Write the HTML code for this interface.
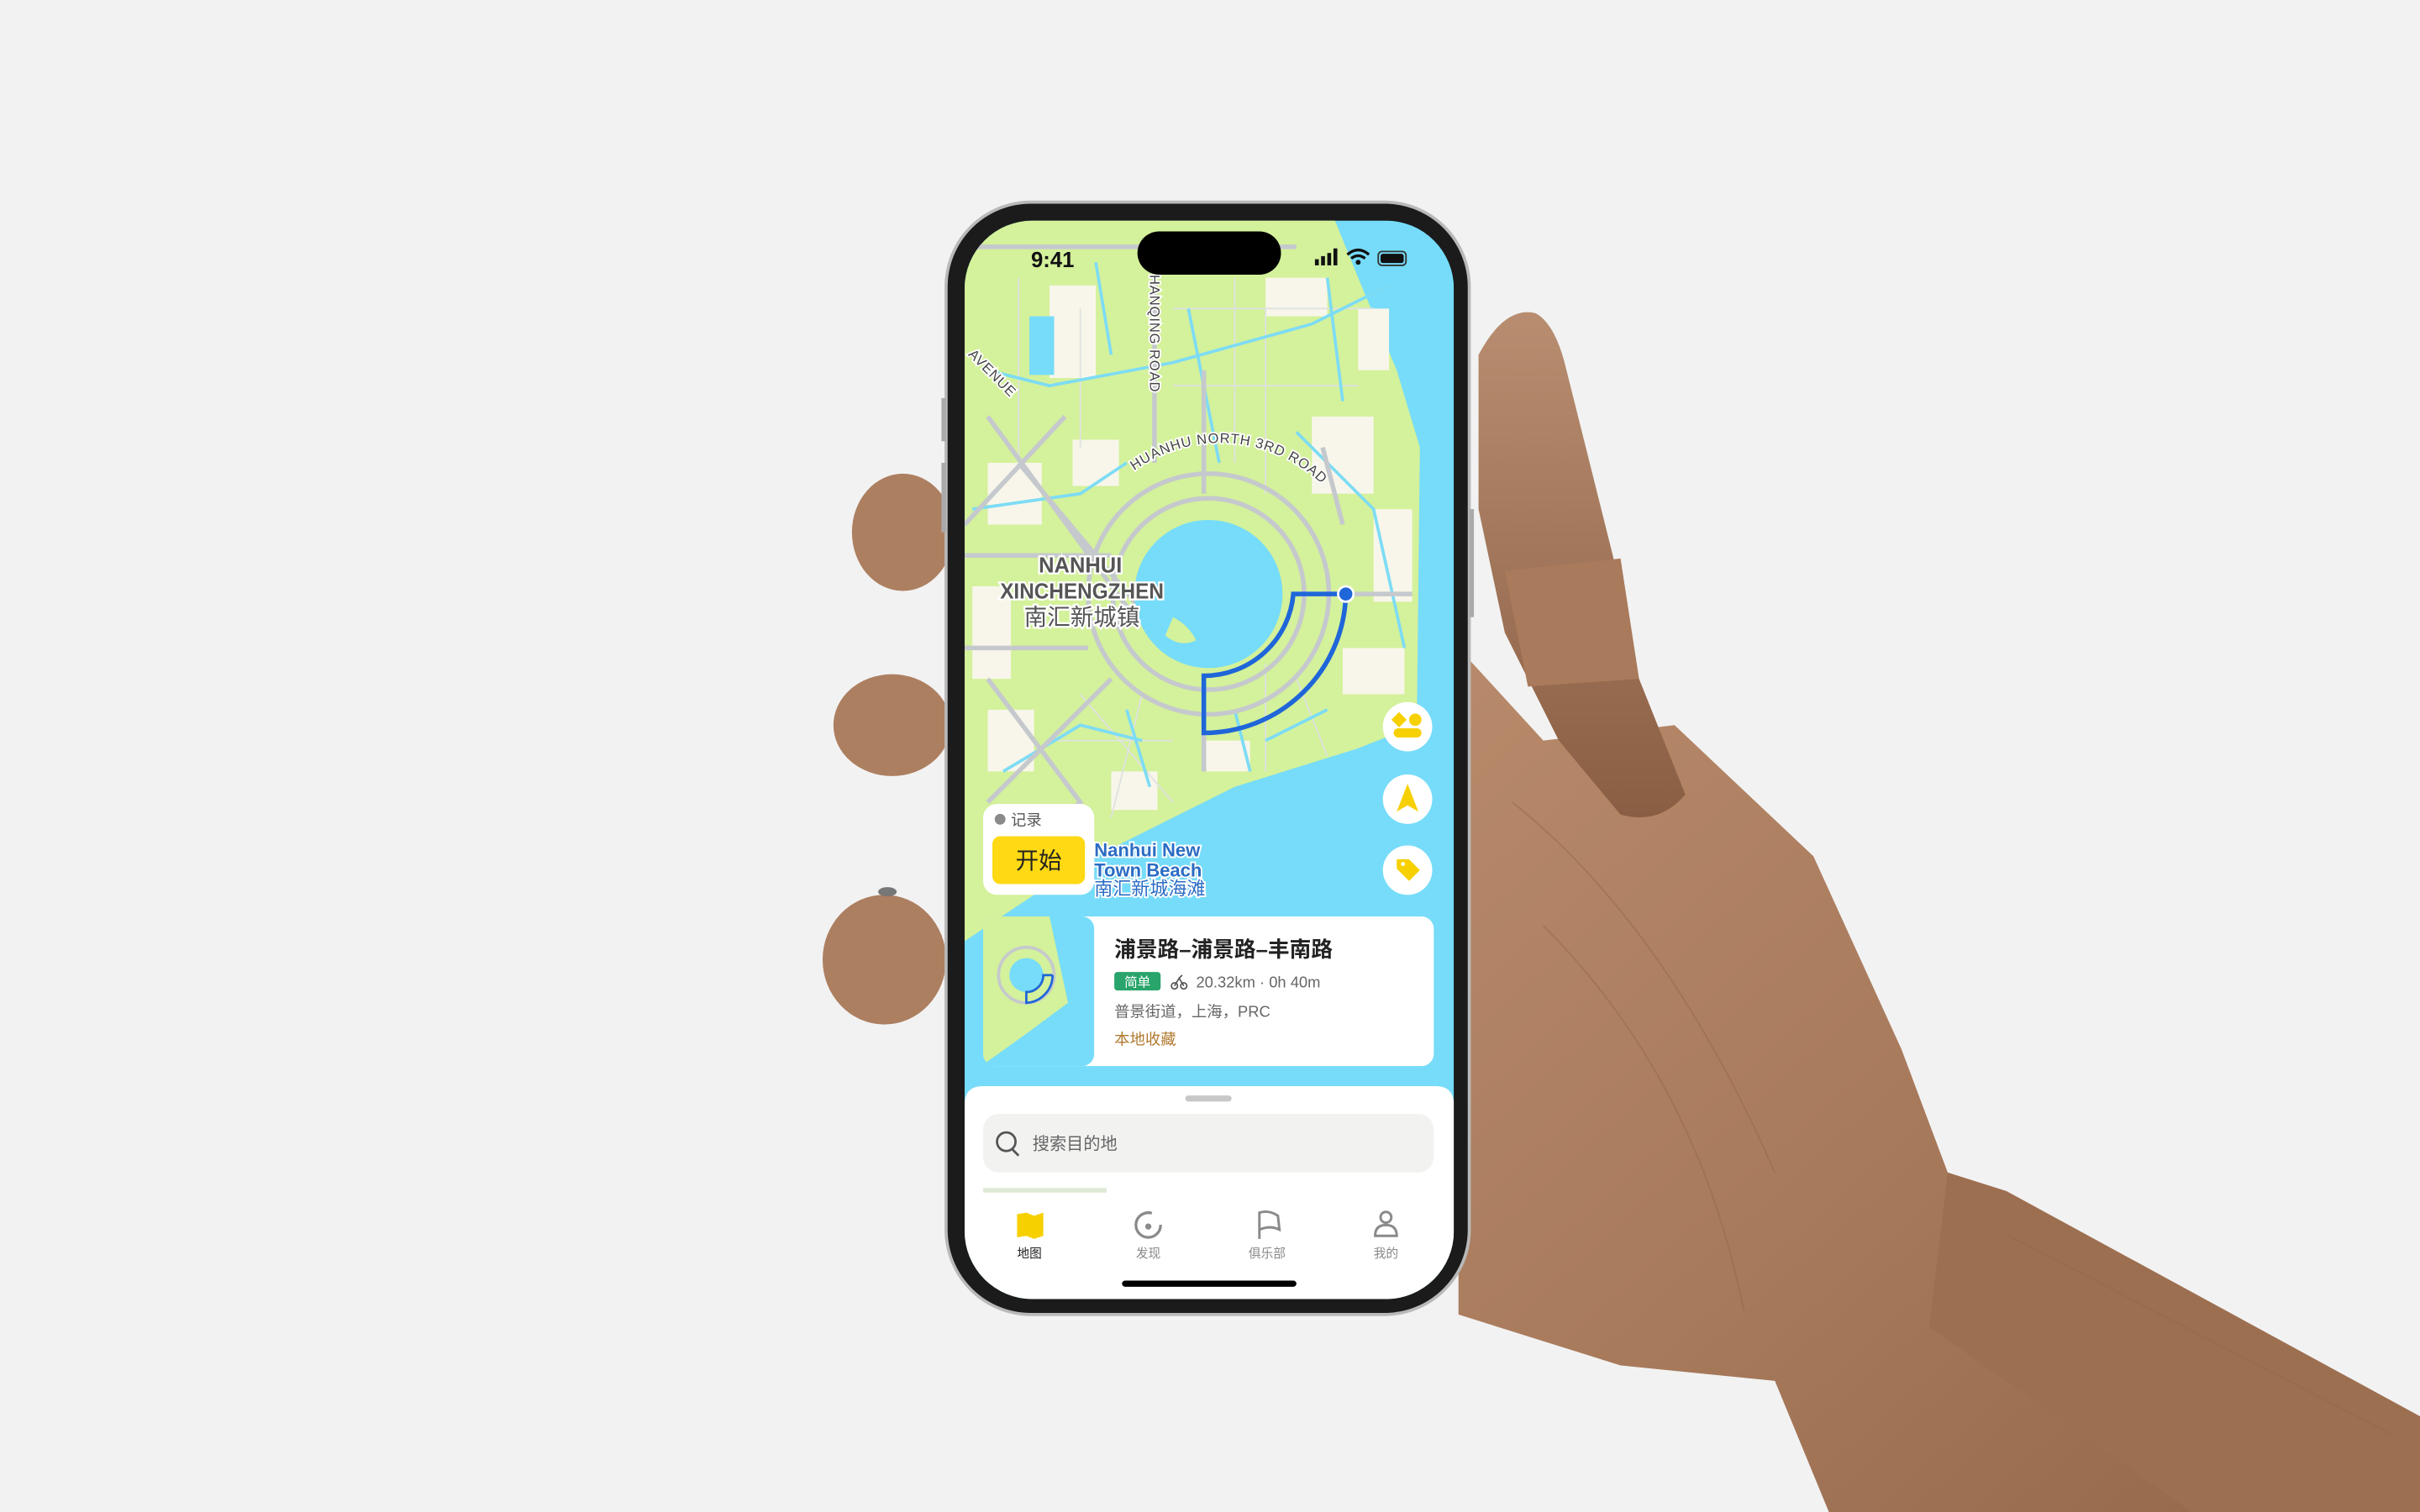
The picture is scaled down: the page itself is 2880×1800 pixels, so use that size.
<!DOCTYPE html>
<html><head><meta charset="utf-8"><style>
html,body{margin:0;padding:0;background:#f2f2f2;}
svg{display:block;}
text{font-family:"Liberation Sans","Noto Sans CJK SC",sans-serif;}
</style></head><body>
<svg width="2880" height="1800" viewBox="0 0 1568 980" xmlns="http://www.w3.org/2000/svg">
<defs>
<clipPath id="scr"><rect x="625" y="143" width="317" height="699" rx="44"/></clipPath>
<clipPath id="thumb"><rect x="637" y="594" width="72" height="97" rx="8"/></clipPath>
<linearGradient id="wood" x1="0" y1="0" x2="1" y2="1">
<stop offset="0" stop-color="#b88a6b"/><stop offset="0.5" stop-color="#a87a5c"/><stop offset="1" stop-color="#936649"/></linearGradient>
<linearGradient id="wood2" x1="0" y1="0" x2="0" y2="1">
<stop offset="0" stop-color="#b88d70"/><stop offset="1" stop-color="#8a5e43"/></linearGradient>
<path id="arcN" d="M 735 305 A 95 95 0 0 1 880 350"/>
</defs>
<rect width="1568" height="980" fill="#f2f2f2"/>
<!-- hand -->
<path d="M945 420 L1000 480 L1085 470 L1175 555 L1232 680 L1262 760 L1300 772 L1568 918 L1568 980 L1185 980 L1150 895 L1050 885 L945 852 Z" fill="url(#wood)"/>
<path d="M1262 760 L1300 772 L1568 918 L1568 980 L1420 980 L1250 860 Z" fill="#9d6f51"/>
<g stroke="#94684b" stroke-width="1" opacity="0.5" fill="none">
<path d="M980 520 Q1080 600 1150 760"/><path d="M1000 600 Q1100 700 1130 850"/><path d="M1300 800 L1550 930"/></g>
<path d="M958 230 Q975 198 995 203 Q1008 210 1015 240 L1045 360 L1062 440 L1092 515 Q1075 535 1050 528 L1010 480 L975 410 L958 330 Z" fill="url(#wood2)"/>
<path d="M975 370 L1050 362 L1062 440 L990 445 Z" fill="#a97a5b"/>
<ellipse cx="585" cy="345" rx="33" ry="38" fill="#ad7f61"/>
<ellipse cx="578" cy="470" rx="38" ry="33" fill="#ad7f61"/>
<ellipse cx="573" cy="622" rx="40" ry="42" fill="#ad7f61"/>
<ellipse cx="575" cy="578" rx="6" ry="3" fill="#777"/>
<!-- phone -->
<rect x="612" y="130" width="341" height="723" rx="56" fill="#b9b9b9"/>
<rect x="614" y="132" width="337" height="719" rx="54" fill="#1b1b1b"/>
<rect x="610" y="258" width="3" height="28" fill="#aaa"/>
<rect x="610" y="300" width="3" height="45" fill="#aaa"/>
<rect x="952" y="330" width="3" height="70" fill="#aaa"/>
<g clip-path="url(#scr)">
<rect x="625" y="143" width="317" height="699" fill="#76dcf9"/>
<path d="M625 143 L865 143 L880 180 L905 240 L920 290 L918 470 L880 485 L800 510 L700 560 L640 600 L625 610 Z" fill="#d4f19b"/>
<g fill="#f8f6ea">
<rect x="680" y="185" width="30" height="60"/><rect x="640" y="300" width="35" height="40"/><rect x="850" y="270" width="40" height="50"/>
<rect x="820" y="180" width="40" height="25"/><rect x="890" y="330" width="25" height="60"/><rect x="630" y="380" width="25" height="60"/>
<rect x="695" y="285" width="30" height="30"/><rect x="870" y="420" width="40" height="30"/><rect x="640" y="460" width="30" height="40"/>
<rect x="880" y="200" width="20" height="40"/><rect x="780" y="480" width="30" height="20"/><rect x="720" y="500" width="30" height="25"/>
</g>
<rect x="667" y="205" width="16" height="38" fill="#76dcf9"/>
<g stroke="#dfe2e0" stroke-width="1" fill="none">
<path d="M800 180 L800 300 M820 200 L820 320 M760 200 L890 200 M760 250 L880 250 M700 200 L700 290 M660 180 L660 300"/>
<path d="M700 450 L760 520 M740 450 L720 530 M680 480 L760 480 M820 430 L820 500 M840 440 L860 490"/>
</g>
<g stroke="#7ddcf5" stroke-width="2" fill="none">
<path d="M640 240 L680 250 L760 235 L850 210 L900 185"/><path d="M630 330 L700 320 L730 300"/><path d="M840 280 L890 330 L910 420"/>
<path d="M770 200 L790 300"/><path d="M820 480 L860 460"/><path d="M650 500 L700 470 L740 480"/>
<path d="M710 170 L720 230"/><path d="M860 180 L870 260"/><path d="M730 460 L745 510"/><path d="M800 460 L810 500"/>
</g>
<g stroke="#c5c9cd" stroke-width="3" fill="none">
<circle cx="783" cy="385" r="62"/><circle cx="783" cy="385" r="78"/>
<path d="M625 360 L720 360"/><path d="M625 420 L705 420"/><path d="M860 385 L915 385"/>
<path d="M640 270 L735 400"/><path d="M690 270 L625 340"/><path d="M660 300 L760 420"/>
<path d="M748 180 L748 300"/><path d="M857 290 L870 340"/><path d="M780 440 L780 500"/>
<path d="M640 440 L700 520 L650 560"/><path d="M720 440 L640 520"/>
<path d="M625 160 L840 160"/><path d="M780 240 L780 320"/>
</g>
<circle cx="783" cy="385" r="48" fill="#76dcf9"/>
<path d="M760 400 Q770 405 775 415 Q765 420 755 412 Z" fill="#d4f19b"/>
<path d="M872 385 L838 385 A58 58 0 0 1 780 438 L780 475 A92 92 0 0 0 872 385" fill="none" stroke="#1f66d9" stroke-width="3"/>
<circle cx="872" cy="385" r="5" fill="#1f66d9" stroke="#fff" stroke-width="1.5"/>
<g font-weight="bold" fill="#555" stroke="#fff" stroke-width="2.5" paint-order="stroke" text-anchor="middle">
<text x="700" y="371" font-size="14" textLength="54" lengthAdjust="spacingAndGlyphs">NANHUI</text>
<text x="701" y="388" font-size="14" textLength="106" lengthAdjust="spacingAndGlyphs">XINCHENGZHEN</text>
<text x="701" y="405" font-size="15" font-weight="normal">南汇新城镇</text>
</g>
<g font-size="9" fill="#444" stroke="#fff" stroke-width="2" paint-order="stroke" letter-spacing="0.5">
<text transform="translate(745,178) rotate(90)">HANQING ROAD</text>
<text transform="translate(627,230) rotate(45)">AVENUE</text>
<text><textPath href="#arcN">HUANHU NORTH 3RD ROAD</textPath></text>
</g>
<g font-size="12" font-weight="bold" fill="#2b6cc4" stroke="#fff" stroke-width="2" paint-order="stroke">
<text x="709" y="555">Nanhui New</text><text x="709" y="568">Town Beach</text><text x="709" y="580" font-weight="normal">南汇新城海滩</text>
</g>
<!-- status bar -->
<text x="668" y="173" font-size="14" font-weight="bold" fill="#111">9:41</text>
<rect x="737" y="150" width="93" height="28" rx="14" fill="#000"/>
<g fill="#111"><rect x="852" y="168" width="2.5" height="4"/><rect x="856" y="166" width="2.5" height="6"/><rect x="860" y="164" width="2.5" height="8"/><rect x="864" y="161" width="2.5" height="11"/></g>
<path d="M873 165 Q880 159 887 165 M875.5 167.5 Q880 164 884.5 167.5" stroke="#111" stroke-width="1.8" fill="none"/><circle cx="880" cy="170" r="1.6" fill="#111"/>
<rect x="893" y="163" width="18" height="9" rx="2.5" fill="none" stroke="#333" stroke-width="1"/><rect x="894.5" y="164.5" width="15" height="6" rx="1.5" fill="#111"/>
<!-- buttons -->
<g fill="#fff"><circle cx="912" cy="471" r="16"/><circle cx="912" cy="518" r="16"/><circle cx="912" cy="564" r="16"/></g>
<g fill="#f7d000">
<rect x="903" y="463" width="7" height="7" transform="rotate(45 906.5 466.5)"/><circle cx="917" cy="466.5" r="4"/><rect x="903" y="472" width="18" height="6" rx="3"/>
<path d="M912 508 L919 526 L912 522 L905 526 Z"/>
<path d="M905 557 L913 557 L920 564 L913 571 L905 563 Z"/>
</g>
<circle cx="909" cy="560" r="1.3" fill="#fff"/>
<!-- record -->
<rect x="637" y="521" width="72" height="59" rx="9" fill="#fff"/>
<circle cx="648" cy="531" r="3.5" fill="#8a8a8a"/><text x="655" y="535" font-size="10" fill="#555">记录</text>
<rect x="643" y="542" width="60" height="31" rx="5" fill="#fed914"/>
<text x="673" y="563" font-size="15" text-anchor="middle" fill="#222">开始</text>
<!-- route card -->
<rect x="637" y="594" width="292" height="97" rx="8" fill="#fff"/>
<g clip-path="url(#thumb)">
<rect x="637" y="594" width="72" height="97" fill="#76dcf9"/>
<path d="M637 594 L680 594 L692 650 L665 670 L637 690 Z" fill="#d4f19b"/>
<circle cx="665" cy="632" r="18" fill="none" stroke="#c5c9cd" stroke-width="2"/>
<circle cx="665" cy="632" r="11" fill="#76dcf9"/>
<path d="M682 632 L676 632 A11 11 0 0 1 665 643 L665 650 A18 18 0 0 0 682 632" fill="none" stroke="#1f66d9" stroke-width="1.5"/>
</g>
<text x="722" y="620" font-size="14" font-weight="bold" fill="#222">浦景路–浦景路–丰南路</text>
<rect x="722" y="630" width="30" height="12" rx="2" fill="#29a46a"/>
<text x="737" y="639.5" font-size="8.5" fill="#fff" text-anchor="middle">简单</text>
<g stroke="#555" stroke-width="0.9" fill="none"><circle cx="761" cy="639" r="2"/><circle cx="767" cy="639" r="2"/><path d="M761 639 L764 634 L767 639 M764 634 L766 632"/></g>
<text x="775" y="640" font-size="10" fill="#666">20.32km · 0h 40m</text>
<text x="722" y="659" font-size="10" fill="#666">普景街道，上海，PRC</text>
<text x="722" y="677" font-size="10" fill="#b07a30">本地收藏</text>
<!-- bottom sheet -->
<path d="M625 716 Q625 704 637 704 L930 704 Q942 704 942 716 L942 842 L625 842 Z" fill="#fff"/>
<rect x="768" y="710" width="30" height="4" rx="2" fill="#c8c8c8"/>
<rect x="637" y="722" width="292" height="38" rx="10" fill="#f2f2f1"/>
<circle cx="652" cy="740" r="6" fill="none" stroke="#555" stroke-width="1.5"/><path d="M656 745 L660 749" stroke="#555" stroke-width="1.5"/>
<text x="669" y="745" font-size="11" fill="#666">搜索目的地</text>
<rect x="637" y="770" width="80" height="3" fill="#dfe9d6"/>
<path d="M659 787 L665 786 L670 788 L676 786 L676 801 L670 803 L665 801 L659 802 Z" fill="#f7d000"/>
<circle cx="744" cy="794" r="8" fill="none" stroke="#8a8a8a" stroke-width="1.8" stroke-dasharray="40 10"/><circle cx="744" cy="795" r="2" fill="#8a8a8a"/>
<path d="M816 803 L816 786 Q822 784 828 788 L829 797 Q823 794 816 797" fill="none" stroke="#8a8a8a" stroke-width="1.6"/>
<circle cx="898" cy="789" r="3.5" fill="none" stroke="#8a8a8a" stroke-width="1.6"/><path d="M891 801 Q891 794 898 794 Q905 794 905 801 Z" fill="none" stroke="#8a8a8a" stroke-width="1.6"/>
<g font-size="8" text-anchor="middle"><text x="667" y="815" fill="#222">地图</text><text x="744" y="815" fill="#888">发现</text><text x="821" y="815" fill="#888">俱乐部</text><text x="898" y="815" fill="#888">我的</text></g>
<rect x="727" y="830" width="113" height="4" rx="2" fill="#000"/>
</g>
</svg>
</body></html>
